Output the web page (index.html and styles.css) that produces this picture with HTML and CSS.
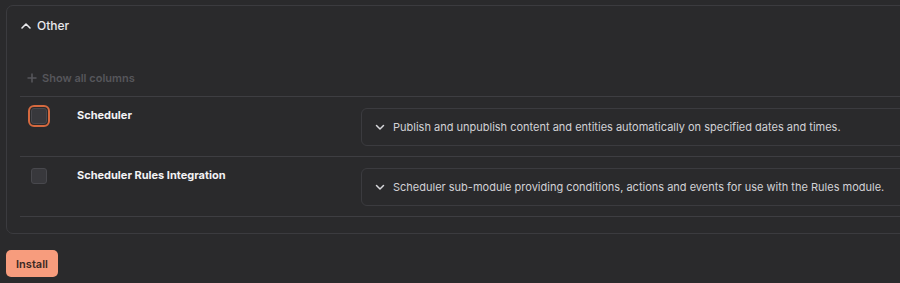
FILE: index.html
```html
<!DOCTYPE html>
<html lang="en">
<head>
  <meta charset="UTF-8" />
  <meta name="viewport" content="width=device-width, initial-scale=1.0">
  <title>Extend - Other</title>
  <link rel="stylesheet" href="styles.css">
</head>
<body>
  <div class="page">
    <div class="card">
      <div class="card-header">
        <svg class="chev" width="12" height="12" viewBox="0 0 12 12"><polyline points="2,8 6,4 10,8" fill="none" stroke="#e8e8ec" stroke-width="1.6" stroke-linecap="round" stroke-linejoin="round"/></svg>
        <span>Other</span>
      </div>
      <div class="show-cols">
        <svg width="10" height="10" viewBox="0 0 10 10"><path d="M5 0.5v9M0.5 5h9" stroke="#56565b" stroke-width="1.6"/></svg>
        <span>Show all columns</span>
      </div>
      <div class="table">
        <div class="row">
          <div class="cell-check"><span class="checkbox focused"></span></div>
          <div class="cell-name">Scheduler</div>
          <div class="cell-desc">
            <div class="desc-box">
              <svg width="10" height="10" viewBox="0 0 10 10"><polyline points="1.5,3.5 5,7 8.5,3.5" fill="none" stroke="#d6d6da" stroke-width="1.5" stroke-linecap="round" stroke-linejoin="round"/></svg>
              <span>Publish and unpublish content and entities automatically on specified dates and times.</span>
            </div>
          </div>
        </div>
        <div class="row">
          <div class="cell-check"><span class="checkbox"></span></div>
          <div class="cell-name">Scheduler Rules Integration</div>
          <div class="cell-desc">
            <div class="desc-box">
              <svg width="10" height="10" viewBox="0 0 10 10"><polyline points="1.5,3.5 5,7 8.5,3.5" fill="none" stroke="#d6d6da" stroke-width="1.5" stroke-linecap="round" stroke-linejoin="round"/></svg>
              <span>Scheduler sub-module providing conditions, actions and events for use with the Rules module.</span>
            </div>
          </div>
        </div>
      </div>
    </div>
    <button class="install">Install</button>
  </div>
</body>
</html>
```

FILE: styles.css
```css
body {
  margin: 0;
  background: #2a2a2c;
  color: #e8e8ec;
  font-family: Inter, "Noto Sans", sans-serif;
  overflow: hidden;
}
.page {
  padding: 5px 0 0 6px;
}
.card {
  border: 1px solid #3b3b3f;
  border-radius: 7px;
  margin-right: -40px;
  padding: 0 0 16px 13px;
}
.card-header {
  display: flex;
  align-items: center;
  gap: 5px;
  height: 39px;
  font-size: 12px;
  font-weight: 500;
  color: #e8e8ec;
}
.show-cols {
  display: flex;
  align-items: center;
  gap: 5px;
  margin-top: 25px;
  height: 16px;
  padding-left: 7px;
  font-size: 11px;
  font-weight: 600;
  color: #56565b;
}
.table {
  margin-top: 10px;
  border-top: 1px solid #3e3e42;
}
.row {
  display: grid;
  grid-template-columns: 57px 284px 1fr;
  border-bottom: 1px solid #3e3e42;
  box-sizing: border-box;
  height: 60px;
  padding-top: 11px;
}
.cell-check {
  padding-left: 11px;
}
.checkbox {
  display: block;
  width: 14px;
  height: 14px;
  background: #38383c;
  border: 1px solid #48484d;
  border-radius: 3px;
}
.checkbox.focused {
  outline: 2px solid #d4693f;
  outline-offset: 1px;
}
.cell-name {
  font-size: 11px;
  font-weight: 700;
  line-height: 14px;
  color: #f2f2f4;
}
.desc-box {
  display: flex;
  align-items: center;
  gap: 8px;
  height: 38px;
  box-sizing: border-box;
  border: 1px solid #3b3b3f;
  border-radius: 6px;
  padding-left: 13px;
  font-size: 11px;
  color: #d2d2d6;
  white-space: nowrap;
}
.install {
  margin-top: 16px;
  background: #f79c7d;
  color: #3a2823;
  border: none;
  border-radius: 5px;
  font-family: Inter, "Noto Sans", sans-serif;
  font-size: 11px;
  font-weight: 600;
  width: 52px;
  height: 27px;
  padding: 0;
  cursor: pointer;
}
```
